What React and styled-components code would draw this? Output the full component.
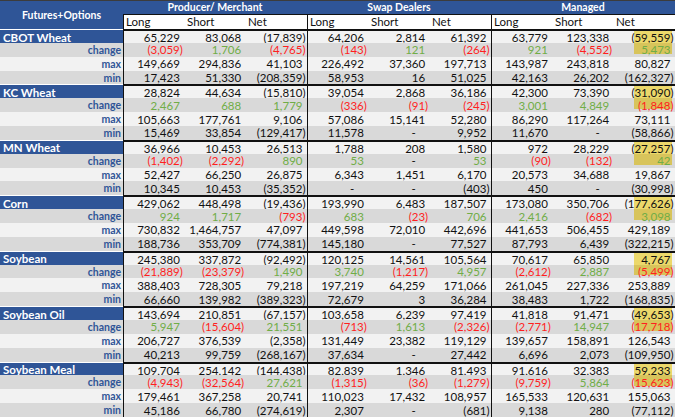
import React from "react";
import styled, { createGlobalStyle, css } from "styled-components";

const GlobalStyle = createGlobalStyle`
  html, body {
    margin: 0;
    padding: 0;
    background: #fff;
  }
  * {
    box-sizing: border-box;
  }
`;

const BLUE = "#2f5597";
const ROW_H = 13.86;

const tones = {
  main: "#f2f2f2",
  change: "#d9d9d9",
  max: "#f2f2f2",
  min: "#d9d9d9",
};

const marks = {
  main: "#ecd86b",
  change: "#d8c45b",
};

const Sheet = styled.div`
  width: 675px;
  height: 417px;
  overflow: hidden;
  background: #fff;
  font-family: Lato, "Liberation Sans", sans-serif;
  color: #111;
`;

const Head = styled.div`
  display: grid;
  grid-template-columns: 123px repeat(3, 1fr);
  grid-template-rows: 13px 15px;
  border-top: 1px solid #3c3c3c;
`;

const Corner = styled.div`
  grid-row: 1 / 3;
  background: ${BLUE};
  color: #fff;
  font-weight: 700;
  font-size: 10.5px;
  display: flex;
  align-items: center;
  justify-content: center;
  padding-bottom: 1px;
`;

const GroupTitle = styled.div`
  grid-row: 1;
  background: ${BLUE};
  color: #fff;
  font-weight: 700;
  font-size: 10.5px;
  line-height: 13px;
  text-align: center;
`;

const SubHead = styled.div`
  grid-row: 2;
  display: grid;
  grid-template-columns: repeat(3, 1fr);
  border-top: 1px solid #111;
  border-left: 1px solid #111;
  background: #fff;
`;

const SubCell = styled.div`
  font-size: 11.5px;
  line-height: 14px;
  padding-left: 2px;
`;

const Row = styled.div`
  display: grid;
  grid-template-columns: 123px repeat(9, 1fr);
  height: ${ROW_H}px;
`;

const Label = styled.div`
  font-weight: 700;
  display: flex;
  align-items: center;
  white-space: nowrap;
  ${({ $kind }) =>
    $kind === "main"
      ? css`
          background: ${BLUE};
          color: #fff;
          font-size: 11.5px;
          padding-left: 3px;
          border-top: 1px solid #fff;
        `
      : css`
          background: ${tones[$kind]};
          color: ${BLUE};
          font-size: 10.5px;
          justify-content: flex-end;
          padding-right: 2px;
        `}
`;

const padFor = (v) => (v === 0 ? 14 : v < 0 ? 1.5 : 4.5);

const Cell = styled.div`
  background: ${({ $tone }) => tones[$tone]};
  color: ${({ $ink }) => $ink};
  font-size: 11.5px;
  display: flex;
  align-items: center;
  justify-content: flex-end;
  padding-right: ${({ $pad }) => $pad}px;
  white-space: nowrap;
  ${({ $group }) =>
    $group &&
    css`
      border-left: 1px solid #111;
    `}
  ${({ $tone }) =>
    $tone === "main" &&
    css`
      border-top: 2px solid #111;
    `}
  ${({ $mark, $tone }) =>
    $mark &&
    css`
      background: linear-gradient(${marks[$tone]}, ${marks[$tone]}) no-repeat
          left 20px top 0 /
          calc(100% - 23px) ${$tone === "main" ? "100%" : "calc(100% - 3px)"},
        ${tones[$tone]};
    `}
`;

const fmt = (v) => {
  if (v === 0) return "-";
  const s = Math.abs(v).toLocaleString("en-US");
  return v < 0 ? `(${s})` : s;
};

const inkFor = (kind, v) => {
  if (kind !== "change" || v === 0) return "#111";
  return v < 0 ? "#ff1f1f" : "#70ad47";
};

const groups = ["Producer/ Merchant", "Swap Dealers", "Managed"];

const blocks = [
  {
    name: "CBOT Wheat",
    main: [65229, 83068, -17839, 64206, 2814, 61392, 63779, 123338, -59559],
    change: [-3059, 1706, -4765, -143, 121, -264, 921, -4552, 5473],
    max: [149669, 294836, 41103, 226492, 37360, 197713, 143987, 243818, 80827],
    min: [17423, 51330, -208359, 58953, 16, 51025, 42163, 26202, -162327],
  },
  {
    name: "KC Wheat",
    main: [28824, 44634, -15810, 39054, 2868, 36186, 42300, 73390, -31090],
    change: [2467, 688, 1779, -336, -91, -245, 3001, 4849, -1848],
    max: [105663, 177761, 9106, 57086, 15141, 52280, 86290, 117264, 73111],
    min: [15469, 33854, -129417, 11578, 0, 9952, 11670, 0, -58866],
  },
  {
    name: "MN Wheat",
    main: [36966, 10453, 26513, 1788, 208, 1580, 972, 28229, -27257],
    change: [-1402, -2292, 890, 53, 0, 53, -90, -132, 42],
    max: [52427, 66250, 26875, 6343, 1451, 6170, 20573, 34688, 19867],
    min: [10345, 10453, -35352, 0, 0, -403, 450, 0, -30998],
  },
  {
    name: "Corn",
    main: [429062, 448498, -19436, 193990, 6483, 187507, 173080, 350706, -177626],
    change: [924, 1717, -793, 683, -23, 706, 2416, -682, 3098],
    max: [730832, 1464757, 47097, 449598, 72010, 442696, 441653, 506455, 429189],
    min: [188736, 353709, -774381, 145180, 0, 77527, 87793, 6439, -322215],
  },
  {
    name: "Soybean",
    main: [245380, 337872, -92492, 120125, 14561, 105564, 70617, 65850, 4767],
    change: [-21889, -23379, 1490, 3740, -1217, 4957, -2612, 2887, -5499],
    max: [388403, 728305, 79218, 197219, 64259, 171066, 261045, 227336, 253889],
    min: [66660, 139982, -389323, 72679, 3, 36284, 38483, 1722, -168835],
  },
  {
    name: "Soybean Oil",
    main: [143694, 210851, -67157, 103658, 6239, 97419, 41818, 91471, -49653],
    change: [5947, -15604, 21551, -713, 1613, -2326, -2771, 14947, -17718],
    max: [206727, 376539, -2358, 131449, 23382, 119129, 139657, 158891, 126543],
    min: [40213, 99759, -268167, 37634, 0, 27442, 6696, 2073, -109950],
  },
  {
    name: "Soybean Meal",
    main: [109704, 254142, -144438, 82839, 1346, 81493, 91616, 32383, 59233],
    change: [-4943, -32564, 27621, -1315, -36, -1279, -9759, 5864, -15623],
    max: [179461, 367258, 20741, 110023, 17432, 108957, 165533, 120631, 155063],
    min: [45186, 66780, -274619, 2307, 0, -681, 9138, 280, -77112],
  },
];

const kinds = ["main", "change", "max", "min"];

const DataRow = ({ kind, name, values }) => (
  <Row>
    <Label $kind={kind}>{kind === "main" ? name : kind}</Label>
    {values.map((v, i) => (
      <Cell
        key={i}
        $tone={kind}
        $group={i % 3 === 0}
        $pad={padFor(v)}
        $ink={inkFor(kind, v)}
        $mark={i === 8 && (kind === "main" || kind === "change")}
      >
        {fmt(v)}
      </Cell>
    ))}
  </Row>
);

export default function App() {
  return (
    <>
      <GlobalStyle />
      <Sheet>
        <Head>
          <Corner>Futures+Options</Corner>
          {groups.map((g) => (
            <GroupTitle key={g}>{g}</GroupTitle>
          ))}
          {groups.map((g) => (
            <SubHead key={g}>
              <SubCell>Long</SubCell>
              <SubCell>Short</SubCell>
              <SubCell>Net</SubCell>
            </SubHead>
          ))}
        </Head>
        {blocks.map((b) =>
          kinds.map((k) => (
            <DataRow key={b.name + k} kind={k} name={b.name} values={b[k]} />
          ))
        )}
      </Sheet>
    </>
  );
}
